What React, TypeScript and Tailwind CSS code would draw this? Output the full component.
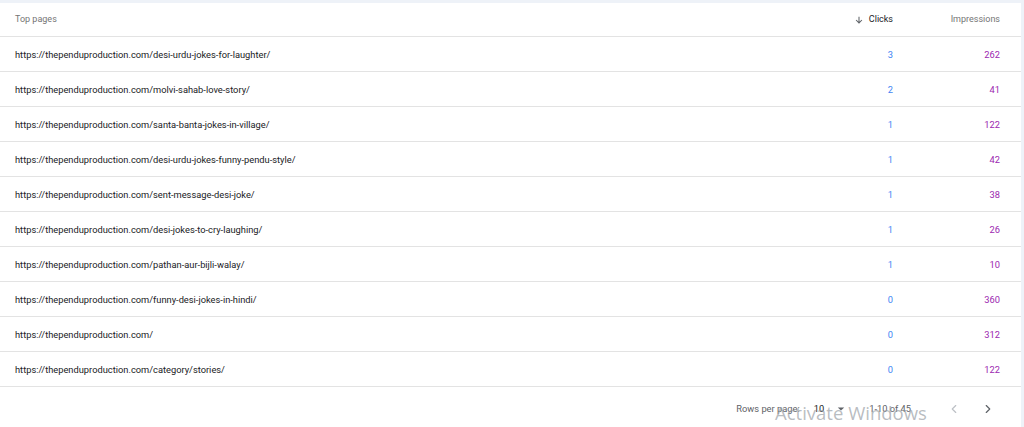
import { ChevronLeft, ChevronRight } from "lucide-react";

const ROWS = [
  { url: "https://thependuproduction.com/desi-urdu-jokes-for-laughter/", clicks: 3, imp: 262 },
  { url: "https://thependuproduction.com/molvi-sahab-love-story/", clicks: 2, imp: 41 },
  { url: "https://thependuproduction.com/santa-banta-jokes-in-village/", clicks: 1, imp: 122 },
  { url: "https://thependuproduction.com/desi-urdu-jokes-funny-pendu-style/", clicks: 1, imp: 42 },
  { url: "https://thependuproduction.com/sent-message-desi-joke/", clicks: 1, imp: 38 },
  { url: "https://thependuproduction.com/desi-jokes-to-cry-laughing/", clicks: 1, imp: 26 },
  { url: "https://thependuproduction.com/pathan-aur-bijli-walay/", clicks: 1, imp: 10 },
  { url: "https://thependuproduction.com/funny-desi-jokes-in-hindi/", clicks: 0, imp: 360 },
  { url: "https://thependuproduction.com/", clicks: 0, imp: 312 },
  { url: "https://thependuproduction.com/category/stories/", clicks: 0, imp: 122 },
];

export default function App() {
  return (
    <div className="w-[1024px] h-[427px] overflow-hidden bg-[#eef2f8] pt-[3px] pr-[3px] font-['Roboto',sans-serif]">
      <div className="relative bg-white rounded-br-lg h-[440px]">
        <div className="flex items-center h-[34px] border-b border-[#e3e3e3] text-[9px] text-[#757575]">
          <div className="flex-1 pl-[15px]">Top pages</div>
          <div className="w-[120px] flex items-center justify-end gap-[5px] text-[#202124]">
            <svg width="10" height="10" viewBox="0 0 24 24" className="text-[#5f6368]">
              <path d="M12 4v15M5 12l7 7 7-7" stroke="currentColor" strokeWidth="2.5" fill="none" />
            </svg>
            Clicks
          </div>
          <div className="w-[128px] text-right pr-[21px]">Impressions</div>
        </div>
        {ROWS.map((r) => (
          <div key={r.url} className="flex items-center h-[35px] pt-[1px] border-b border-[#e3e3e3] text-[9.3px]">
            <div className="flex-1 pl-[15px] text-[#202124]">{r.url}</div>
            <div className="w-[120px] text-right text-[#4285f4]">{r.clicks}</div>
            <div className="w-[128px] text-right pr-[21px] text-[#9c27b0]">{r.imp}</div>
          </div>
        ))}
        <div className="flex items-center justify-end h-[42px] pt-[2px] text-[9.3px] text-[#5f6368]">
          <span className="mr-[14px]">Rows per page:</span>
          <span className="text-[#202124] mr-[13px]">10</span>
          <svg width="8" height="8" viewBox="0 0 10 10" className="mr-[24px]">
            <path d="M1 3h8l-4 4z" fill="#5f6368" />
          </svg>
          <span className="mr-[36px]">1-10 of 45</span>
          <ChevronLeft className="w-[14px] h-[14px] text-[#bdc1c6] mr-[20px]" />
          <ChevronRight className="w-[14px] h-[14px] text-[#5f6368] mr-[26px]" />
        </div>
        <div className="absolute left-[775px] top-[396px] text-[18.5px] text-[#9aa0a6]/70 font-['Open_Sans',sans-serif] pointer-events-none">
          Activate Windows
        </div>
      </div>
    </div>
  );
}
